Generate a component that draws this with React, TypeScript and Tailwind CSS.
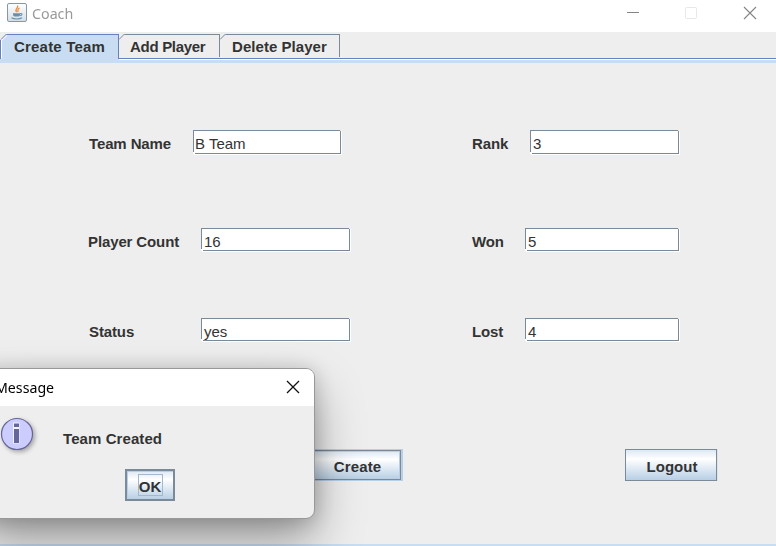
import React from "react";

function Field({ value, size }: { value: string; size: string }) {
  return (
    <div
      className={`relative border border-[#7a8a99] bg-white pl-[2px] text-[15px] leading-[26px] whitespace-nowrap shadow-[1px_1px_0_#fff] ${size}`}
    >
      {value}
      <i className="absolute -bottom-px -left-px size-[2px] bg-white" />
      <i className="absolute -top-px -right-px h-px w-px bg-[#eee]" />
    </div>
  );
}

function Label({ text, size }: { text: string; size: string }) {
  return <label className={`pt-[4px] text-[15px] leading-[20px] font-bold tracking-[-.12px] whitespace-nowrap ${size}`}>{text}</label>;
}

function Tab({ text, size }: { text: string; size: string }) {
  return (
    <div className={`relative h-[23px] border-t border-r border-[#7a8a99] leading-[24px] ${size}`}>
      <svg className="absolute -top-px left-0" width="6" height="6">
        <path d="M0 0H6L0 6Z" fill="#eee" />
        <path d="M0 5.5L5.5 0" stroke="#7a8a99" />
      </svg>
      {text}
    </div>
  );
}

export default function App() {
  return (
    <div className="relative flex h-[546px] w-[776px] flex-col overflow-hidden bg-[#eee] font-['Liberation_Sans',Arial,sans-serif] text-[#333]">
      <header className="flex h-[32px] shrink-0 items-start bg-white pl-[7px]">
        <svg className="mt-[3px]" width="20" height="19" viewBox="0 0 20 19">
          <defs>
            <linearGradient id="tile" x2="0" y2="1">
              <stop stopColor="#fff" />
              <stop offset="1" stopColor="#d5dde3" />
            </linearGradient>
          </defs>
          <rect x=".5" y=".5" width="19" height="18" rx="1.5" fill="url(#tile)" stroke="#8499a8" />
          <path d="M10.5 2.5C12 5 7 6.2 9.6 9M12.5 5C9.5 6.5 12 7.5 10.5 9" fill="none" stroke="#ee8c3c" strokeWidth="1.3" />
          <path d="M6 10.3H13V11.5C13 13.2 11.7 13.5 9.5 13.5S6 13.2 6 11.5Z" fill="#6f8ea6" />
          <path d="M13 10.7C16 10 15.5 12.7 12.5 12.8M4.5 14.7C7 16.4 12.5 16.3 15 14.7" fill="none" stroke="#6f8ea6" strokeWidth="1.1" />
        </svg>
        <span className="ml-[5px] w-[590px] origin-left scale-x-[.95] pt-[3px] font-['Noto_Sans',sans-serif] text-[15px] leading-[21px] text-[#999]">Coach</span>
        <svg className="mt-[6px] -ml-px" width="140" height="14" fill="none">
          <path d="M6 6.5H18" stroke="#858585" />
          <rect x="64.5" y="1.5" width="11" height="11" rx="1" stroke="#e8e8e8" />
          <path d="M123 1L135 13M135 1L123 13" stroke="#858585" strokeWidth="1.1" />
        </svg>
      </header>

      <nav className="flex h-[31px] shrink-0 items-start border-b-[3px] border-[#c8ddf2] pt-[2px] text-[15px] font-bold whitespace-nowrap">
        <div className="relative -mb-[3px] h-[29px] w-[119px] border-t border-r border-[#6382bf] bg-[#c8ddf2] pl-[14px] leading-[24px] tracking-[.2px]">
          <svg className="absolute -top-px left-0" width="8" height="25" fill="none">
            <path d="M0 0H7L2 5V25H0Z" fill="#eee" />
            <path d="M0 24.5H1M.5 24V6M1 5.5L6.5 0" stroke="#6382bf" />
            <path d="M1.5 24V6.5L7 1.5" stroke="#fff" />
          </svg>
          Create Team
          <i className="absolute -right-px bottom-0 h-[4px] w-px bg-[#c8ddf2]" />
        </div>
        <div className="relative flex h-[26px] flex-1 after:absolute after:inset-x-0 after:top-[24px] after:h-[2px] after:border-t after:border-[#6382bf] after:bg-white">
          <Tab text="Add Player" size="w-[101px] pl-[11px] tracking-[-.3px]" />
          <Tab text="Delete Player" size="w-[120px] pl-[12px] tracking-[.05px]" />
        </div>
      </nav>

      <main className="flex flex-1 flex-col border-b-2 border-[#c8ddf2] pt-[67px]">
        <div className="flex h-[98px] items-start pl-[89px]">
          <Label text="Team Name" size="w-[104px]" />
          <Field value="B Team" size="h-[24px] w-[148px] -indent-px" />
          <Label text="Rank" size="ml-[131px] w-[58px]" />
          <Field value="3" size="h-[24px] w-[149px]" />
        </div>
        <div className="flex h-[90px] items-start pl-[88px]">
          <Label text="Player Count" size="w-[113px]" />
          <Field value="16" size="h-[23px] w-[149px]" />
          <Label text="Won" size="ml-[122px] w-[53px]" />
          <Field value="5" size="h-[23px] w-[154px]" />
        </div>
        <div className="flex h-[131px] items-start pl-[89px]">
          <Label text="Status" size="w-[112px]" />
          <Field value="yes" size="h-[23px] w-[149px]" />
          <Label text="Lost" size="ml-[122px] w-[53px]" />
          <Field value="4" size="h-[23px] w-[154px]" />
        </div>
        <div className="flex pl-[312px] text-[15px] font-bold">
          <button className="h-[32px] w-[91px] border border-r-2 border-[#b8cfe5] p-0">
            <span className="block h-[30px] border border-[#7a8a99] bg-[linear-gradient(#dde8f3,#fff_30%,#b8cfe5)] pl-px leading-[32px] tracking-[.15px] shadow-[inset_0_0_0_1px_#b8cfe5]">Create</span>
          </button>
          <button className="ml-[222px] h-[32px] w-[92px] border border-[#7a8a99] bg-[linear-gradient(#dde8f3,#fff_30%,#b8cfe5)] pl-[2px] leading-[34px] shadow-[1px_0_0_#dce4eb]">Logout</button>
        </div>
      </main>

      <section className="absolute top-[368px] -left-[20px] h-[151px] w-[335px] rounded-[9px] border border-[#989898] bg-[#eee] shadow-[0_24px_48px_rgba(0,0,0,.34),0_2px_20px_rgba(0,0,0,.2)]">
        <div className="flex h-[37px] items-start rounded-t-[8px] bg-white pt-[7px]">
          <span className="ml-[14px] w-[291px] origin-left scale-x-[.945] font-['Noto_Sans',sans-serif] text-[15px] leading-[22px] text-black">Message</span>
          <svg className="mt-[4px]" width="14" height="14">
            <path d="M1 1L13 13M13 1L1 13" stroke="#111" strokeWidth="1.3" />
          </svg>
        </div>
        <div className="flex h-[63px] items-start pt-[11px] pl-[19px]">
          <svg className="drop-shadow-[2px_2px_2px_rgba(0,0,0,.3)]" width="34" height="34">
            <circle cx="17" cy="17" r="15.5" fill="#ccf" stroke="#669" strokeWidth="1.2" />
            <path d="M13 5.5H19.5V26.5H13Z" fill="#f2f2ff" />
            <path d="M14 6.5H19V10H14ZM14 12H19V26H14Z" fill="#669" />
          </svg>
          <span className="ml-[29px] pt-[11px] text-[15px] leading-[22px] font-bold tracking-[.08px]">Team Created</span>
        </div>
        <button className="ml-[144px] flex h-[32px] w-[50px] items-center justify-center border-2 border-[#7a8a99] bg-[linear-gradient(#dde8f3,#fff_30%,#b8cfe5)] text-[15px] font-bold shadow-[inset_1px_1px_0_#b8cfe5]">
          <span className="h-[22px] w-[25px] border border-[#a3b8cc] leading-[24px]">OK</span>
        </button>
      </section>
    </div>
  );
}
